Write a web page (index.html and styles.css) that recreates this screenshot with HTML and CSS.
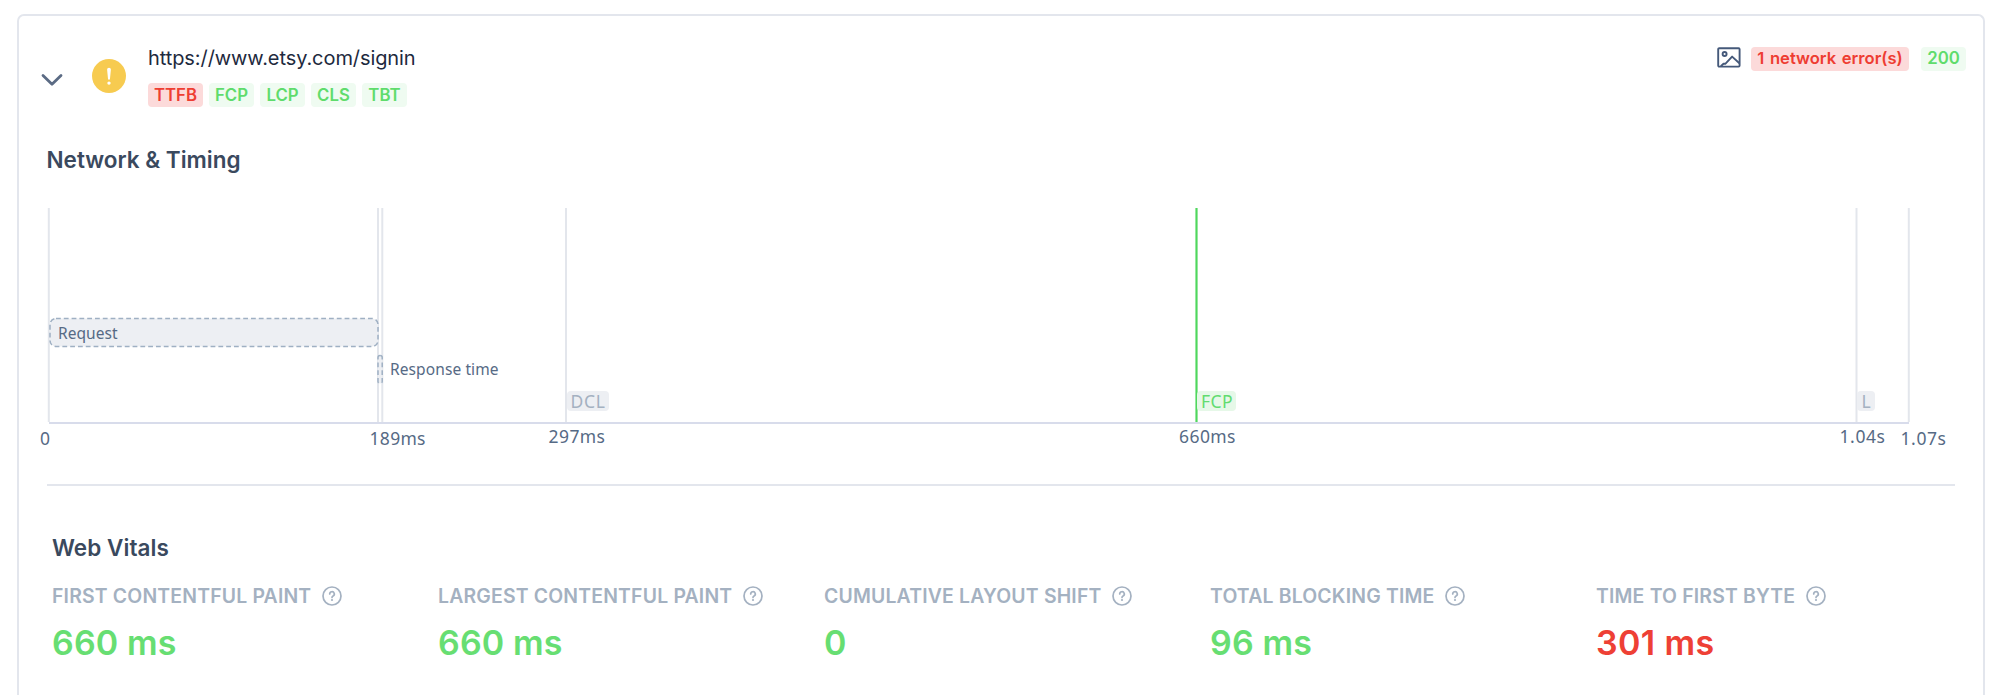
FILE: index.html
```html
<!DOCTYPE html>
<html lang="en">
<head>
<meta charset="utf-8">
<title>Network &amp; Timing</title>
<link rel="stylesheet" href="styles.css">
</head>
<body>
<svg class="defs" width="0" height="0">
  <symbol id="help" viewBox="0 0 20 20">
    <circle cx="10" cy="10" r="9" fill="none" stroke="currentColor" stroke-width="1.7"/>
    <path d="M7.7 8a2.3 2.3 0 1 1 3.4 2c-.8.45-1.1.75-1.1 1.4" fill="none" stroke="currentColor" stroke-width="1.7" stroke-linecap="round"/>
    <circle cx="10" cy="14" r="1.1" fill="currentColor"/>
  </symbol>
</svg>
<main class="card">
  <header class="head">
    <svg class="chevron" width="22" height="14" viewBox="0 0 22 14"><path d="M2 2.5l9 8.7 9-8.7" fill="none" stroke="#5b6b84" stroke-width="2.8" stroke-linecap="round" stroke-linejoin="round"/></svg>
    <svg class="warning" width="34" height="34" viewBox="0 0 34 34"><circle cx="17" cy="17" r="17" fill="#f7cb50"/><path d="M15.1 10.6a1.9 1.9 0 0 1 3.8 0l-.9 9.2a1 1 0 0 1-2 0z" fill="#fff"/><circle cx="17" cy="24.1" r="1.7" fill="#fff"/></svg>
    <div class="page">
      <div class="url">https://www.etsy.com/signin</div>
      <div class="badges">
        <span class="badge bad wide">TTFB</span><span class="badge good">FCP</span><span class="badge good">LCP</span><span class="badge good">CLS</span><span class="badge good">TBT</span>
      </div>
    </div>
    <div class="status">
      <svg class="picture" width="24" height="21" viewBox="0 0 24 21" fill="none" stroke="#45597a" stroke-width="1.9" stroke-linejoin="round"><rect x="1.2" y="1.2" width="21.4" height="18.4" rx="1"/><circle cx="7.6" cy="7" r="2"/><path d="M3.8 19.2l2.7-2.4h1.8l6.8-7.2 7.3 6.7"/></svg>
      <span class="badge bad errors">1 network error(s)</span>
      <span class="badge good">200</span>
    </div>
  </header>
  <h2 class="title">Network &amp; Timing</h2>
  <svg class="chart" width="1920" height="250" viewBox="30 200 1920 250">
    <g class="grid">
      <path d="M48.8 208V422M378 208V422M382.3 208V422M566 208V422M1856.5 208V422M1908.8 208V422"/>
      <path class="axis" d="M49 423H1909"/>
      <path class="fcp-line" d="M1196.5 208V422"/>
    </g>
    <rect class="bar" x="50" y="318.5" width="328" height="28" rx="6"/>
    <rect class="bar" x="378" y="355.5" width="4.2" height="28" rx="2.1"/>
    <text class="bar-label" x="58" y="338.5" textLength="59.5">Request</text>
    <text class="bar-label" x="390" y="375" textLength="108.5">Response time</text>
    <rect class="tag" x="567" y="391" width="42" height="20" rx="4"/>
    <rect class="tag tag-good" x="1197" y="391" width="39" height="20" rx="4"/>
    <rect class="tag" x="1857" y="391" width="18" height="20" rx="4"/>
    <text class="tag-label" x="570.5" y="407.5" textLength="34.5">DCL</text>
    <text class="tag-label good-label" x="1201" y="407.5" textLength="31.5">FCP</text>
    <text class="tag-label" x="1861.5" y="407.5">L</text>
    <text class="tick" x="40" y="444.5">0</text>
    <text class="tick" x="369.5" y="444.5" textLength="56">189ms</text>
    <text class="tick" x="548.5" y="443" textLength="56.5">297ms</text>
    <text class="tick" x="1179" y="443" textLength="56.5">660ms</text>
    <text class="tick" x="1839.5" y="443" textLength="45.5">1.04s</text>
    <text class="tick" x="1900.5" y="444.5" textLength="45.5">1.07s</text>
  </svg>
  <section class="vitals">
    <h2 class="vitals-title">Web Vitals</h2>
    <div class="metrics">
      <div><div class="name">FIRST CONTENTFUL PAINT<svg class="help"><use href="#help"/></svg></div><div class="value">660 ms</div></div>
      <div><div class="name">LARGEST CONTENTFUL PAINT<svg class="help"><use href="#help"/></svg></div><div class="value">660 ms</div></div>
      <div><div class="name">CUMULATIVE LAYOUT SHIFT<svg class="help"><use href="#help"/></svg></div><div class="value">0</div></div>
      <div><div class="name">TOTAL BLOCKING TIME<svg class="help"><use href="#help"/></svg></div><div class="value">96 ms</div></div>
      <div><div class="name">TIME TO FIRST BYTE<svg class="help"><use href="#help"/></svg></div><div class="value slow">301 ms</div></div>
    </div>
  </section>
</main>
</body>
</html>
```

FILE: styles.css
```css
* { box-sizing: border-box; }
html, body { margin: 0; height: 100%; background: #fff; overflow: hidden; }
body { padding: 14px 15px 0 17px; font-family: Inter, "Liberation Sans", sans-serif; }
.defs { display: block; height: 0; }
.card { height: 681px; overflow: hidden; border: 2px solid #e3e6ed; border-bottom: 0; border-radius: 7px 7px 0 0; }
.head { display: flex; height: 116px; padding: 0 17px 0 22px; }
.chevron { margin: 57px 0 0 0; }
.warning { margin: 43px 0 0 29px; }
.page { margin: 29px 0 0 22px; }
.url { height: 26px; line-height: 26px; font-size: 20px; letter-spacing: -0.08px; color: #1e2a3e; white-space: nowrap; }
.badges { display: flex; gap: 6px; margin-top: 12px; }
.badge { display: block; width: 45px; height: 24px; border-radius: 4px; line-height: 24px; font-size: 16.8px; font-weight: 600; text-align: center; white-space: nowrap; }
.badge.wide { width: 55px; }
.badge.errors { width: 158px; margin: 0 12px 0 11px; font-size: 16.6px; word-spacing: 1.5px; }
.status .badge { line-height: 23px; }
.good { background: #effbf1; color: #5fdc6c; }
.bad { background: #fcdada; color: #ee3d32; }
.status { display: flex; margin: 31px 0 0 auto; }
.picture { margin-left: 1px; }
.badge.errors { margin-left: 10px; }
.title { height: 30px; margin: 13px 0 0 27.5px; line-height: 30px; font-size: 22.5px; font-weight: 600; color: #3a495e; }
.chart { display: block; margin: 25px 0 0 11px; font-family: "Noto Sans", "Open Sans", sans-serif; }
.grid path { fill: none; stroke: #e3e6ec; stroke-width: 2; }
.grid .axis { stroke: #d8dceb; }
.grid .fcp-line { stroke: #4fd75d; stroke-width: 2.2; }
.bar { fill: #edeff3; stroke: #9fb0c3; stroke-width: 1.5; stroke-dasharray: 4.8 3; }
.bar-label { font-size: 15.5px; fill: #566a85; }
.tag { fill: #edeff3; }
.tag-good { fill: #e6f8e8; }
.tag-label { font-size: 17.5px; fill: #a4b1c1; }
.good-label { fill: #62dc70; }
.tick { font-size: 17.5px; fill: #566a85; }
.vitals { margin: 34px 28px 0 28px; border-top: 2px solid #e3e6ed; padding: 47px 0 0 5px; }
.vitals-title { height: 30px; margin: 0; line-height: 30px; font-size: 22.5px; font-weight: 600; color: #3a495e; letter-spacing: 0.05px; }
.metrics { display: grid; grid-template-columns: repeat(5, 386px); margin-top: 21px; }
.name { display: flex; align-items: center; height: 24px; font-size: 19.4px; font-weight: 600; letter-spacing: 0.19px; color: #a4b1c1; white-space: nowrap; }
.help { width: 20px; height: 20px; margin-left: 11px; }
.value { height: 44px; margin-top: 13px; line-height: 44px; font-size: 34px; font-weight: 600; letter-spacing: 0.15px; color: #67de72; white-space: nowrap; }
.value.slow { color: #ee4035; letter-spacing: 0.4px; }
```
